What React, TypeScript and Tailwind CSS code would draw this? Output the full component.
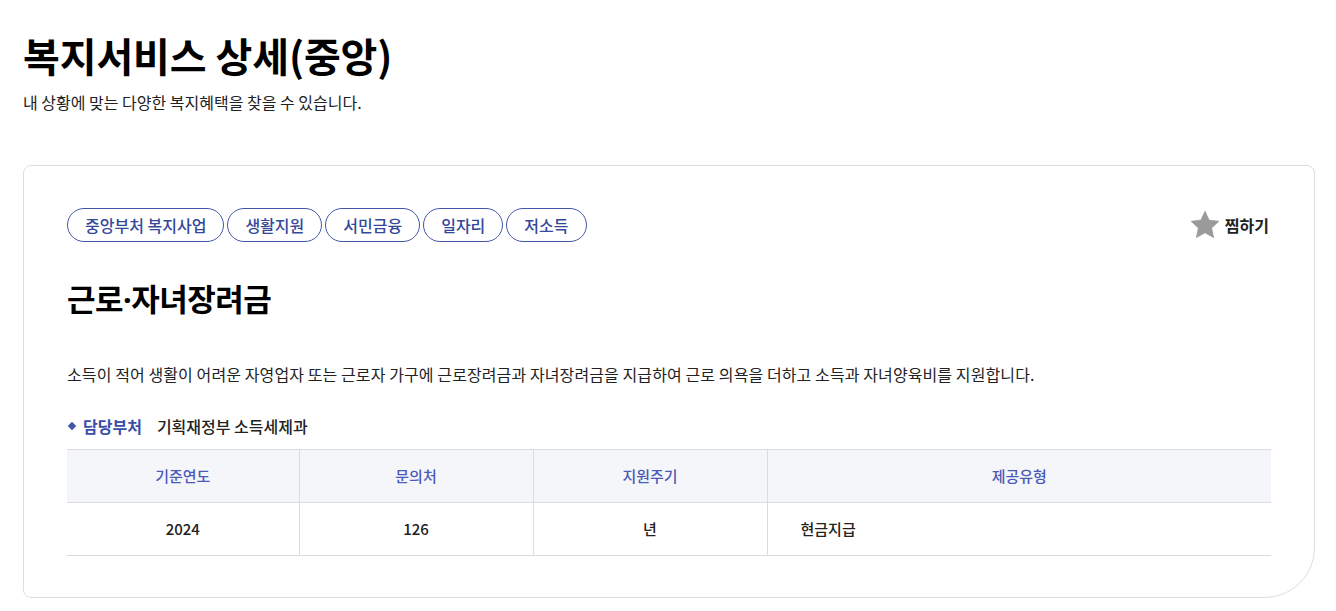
import React from "react";

const tags = ["중앙부처 복지사업", "생활지원", "서민금융", "일자리", "저소득"];

export default function App() {
  return (
    <div
      className="bg-white min-h-[611px] pl-[23px] pt-[29px] text-[#111]"
      style={{ fontFamily: '"Noto Sans CJK KR", "Noto Sans", sans-serif' }}
    >
      <h1 className="text-[40px] leading-[52px] font-bold tracking-[-0.1px] text-black">복지서비스 상세(중앙)</h1>
      <p className="mt-[10px] text-[16px] leading-[22px] text-[#222]">내 상황에 맞는 다양한 복지혜택을 찾을 수 있습니다.</p>

      <div className="mt-[52px] w-[1292px] border border-[#dedede] rounded-tl-[8px] rounded-tr-[8px] rounded-bl-[8px] rounded-br-[50px] px-[43px] pt-[42px] pb-[41px]">
        <div className="flex items-center justify-between">
          <div className="flex gap-[3px]">
            {tags.map((t) => (
              <span
                key={t}
                className="h-[34px] px-[17px] flex items-center rounded-full border border-[#4357a8] text-[#34489a] text-[16px] font-medium"
              >
                {t}
              </span>
            ))}
          </div>
          <button className="flex items-center gap-[6px] mr-[2px] text-[16px] font-bold text-[#222]">
            <svg width="28" height="28" viewBox="1.6 1.6 20.8 20.8">
              <path
                d="M12 1.8l3.05 6.6 7.2.85-5.33 4.93 1.42 7.12L12 17.7l-6.34 3.6 1.42-7.12L1.75 9.25l7.2-.85z"
                fill="#9a9a9a"
                stroke="#9a9a9a"
                strokeWidth="0.6"
                strokeLinejoin="round"
              />
            </svg>
            찜하기
          </button>
        </div>

        <h2 className="mt-[36px] text-[31px] leading-[40px] font-bold text-black tracking-[-0.5px]">
          근로<span style={{ fontFamily: '"Noto Sans", sans-serif' }}>·</span>자녀장려금
        </h2>

        <p className="mt-[43px] text-[16px] leading-[24px] text-[#222] tracking-[0.1px]">
          소득이 적어 생활이 어려운 자영업자 또는 근로자 가구에 근로장려금과 자녀장려금을 지급하여 근로 의욕을 더하고 소득과 자녀양육비를 지원합니다.
        </p>

        <div className="mt-[28px] flex items-center text-[16px] leading-[24px]">
          <span className="ml-[2px] w-[6px] h-[6px] bg-[#4357a8] rotate-45" />
          <span className="ml-[8px] font-bold text-[#3a4ea8]">담당부처</span>
          <span className="ml-[15px] font-medium text-[#222]">기획재정부 소득세제과</span>
        </div>

        <table className="mt-[11px] w-full border-collapse text-[15px]">
          <colgroup>
            <col className="w-[232px]" />
            <col className="w-[234px]" />
            <col className="w-[234px]" />
            <col />
          </colgroup>
          <thead>
            <tr className="bg-[#f5f6fa] border-t border-b border-[#dcdcdc] h-[53px]">
              {["기준연도", "문의처", "지원주기", "제공유형"].map((h, i) => (
                <th
                  key={h}
                  className={`font-medium text-[#4a5ab8] text-center ${i < 3 ? "border-r border-[#dcdcdc]" : ""}`}
                >
                  {h}
                </th>
              ))}
            </tr>
          </thead>
          <tbody>
            <tr className="border-b border-[#dcdcdc] h-[53px] text-[#222] font-medium">
              <td className="text-center border-r border-[#dcdcdc]">2024</td>
              <td className="text-center border-r border-[#dcdcdc]">126</td>
              <td className="text-center border-r border-[#dcdcdc]">년</td>
              <td className="text-left pl-[33px]">현금지급</td>
            </tr>
          </tbody>
        </table>
      </div>
    </div>
  );
}
